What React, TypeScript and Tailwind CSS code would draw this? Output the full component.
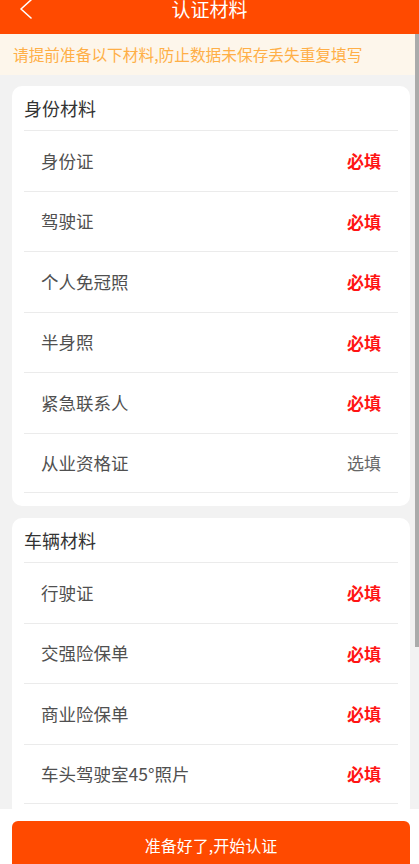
import React from "react";

const FONT = { fontFamily: '"Noto Sans CJK SC", "Noto Sans", sans-serif' };

type Item = { name: string; required: boolean };

const identity: Item[] = [
  { name: "身份证", required: true },
  { name: "驾驶证", required: true },
  { name: "个人免冠照", required: true },
  { name: "半身照", required: true },
  { name: "紧急联系人", required: true },
  { name: "从业资格证", required: false },
];

const vehicle: Item[] = [
  { name: "行驶证", required: true },
  { name: "交强险保单", required: true },
  { name: "商业险保单", required: true },
  { name: "车头驾驶室45°照片", required: true },
];

function Card({ title, items }: { title: string; items: Item[] }) {
  return (
    <div className="ml-[12px] mr-[9px] rounded-[10px] bg-white px-[12px] pb-[13px]">
      <div className="flex h-[44px] items-center text-[18px] text-[#333333]">{title}</div>
      {items.map((it, i) => (
        <div
          key={it.name}
          className={
            "flex h-[60.5px] items-center justify-between border-t border-[#EBEBEB] px-[17px]" +
            (i === items.length - 1 ? " border-b" : "")
          }
        >
          <span className="text-[17.5px] text-[#505050]">{it.name}</span>
          {it.required ? (
            <span className="text-[17px] font-bold text-[#FF1414]">必填</span>
          ) : (
            <span className="text-[17px] text-[#666666]">选填</span>
          )}
        </div>
      ))}
    </div>
  );
}

export default function App() {
  return (
    <div className="flex h-[864px] w-[419px] flex-col overflow-hidden bg-[#F2F2F2]" style={FONT}>
      <div className="grid h-[34px] shrink-0 grid-cols-[1fr_auto_1fr] items-start bg-[#FF4A00]">
        <div className="pl-[19px]">
          <svg width="14" height="20" viewBox="0 0 14 20" className="-mt-[1px]">
            <path d="M12 1 L2 10 L12 19" fill="none" stroke="#FFFFFF" strokeWidth="1.6" strokeLinecap="round" strokeLinejoin="round" />
          </svg>
        </div>
        <div className="flex h-[16px] items-center text-[19px] leading-none text-white">认证材料</div>
        <div />
      </div>
      <div className="relative flex-1 overflow-hidden">
        <div className="flex h-[41px] items-center bg-[#FDF6EB] px-[13px] text-[15.7px] text-[#FFAF47]">
          请提前准备以下材料,防止数据未保存丢失重复填写
        </div>
        <div className="flex flex-col gap-[12px] pt-[11px]">
          <Card title="身份材料" items={identity} />
          <Card title="车辆材料" items={vehicle} />
        </div>
        <div className="absolute right-0 top-0 h-[613px] w-[4px] bg-[#ABABAB]" />
      </div>
      <div className="h-[55px] shrink-0 bg-white pt-[12px]">
        <div className="ml-[12px] mr-[9px] flex h-[48px] items-center justify-center rounded-[6px] bg-[#FF4A00] text-[16px] text-white">
          准备好了,开始认证
        </div>
      </div>
    </div>
  );
}
